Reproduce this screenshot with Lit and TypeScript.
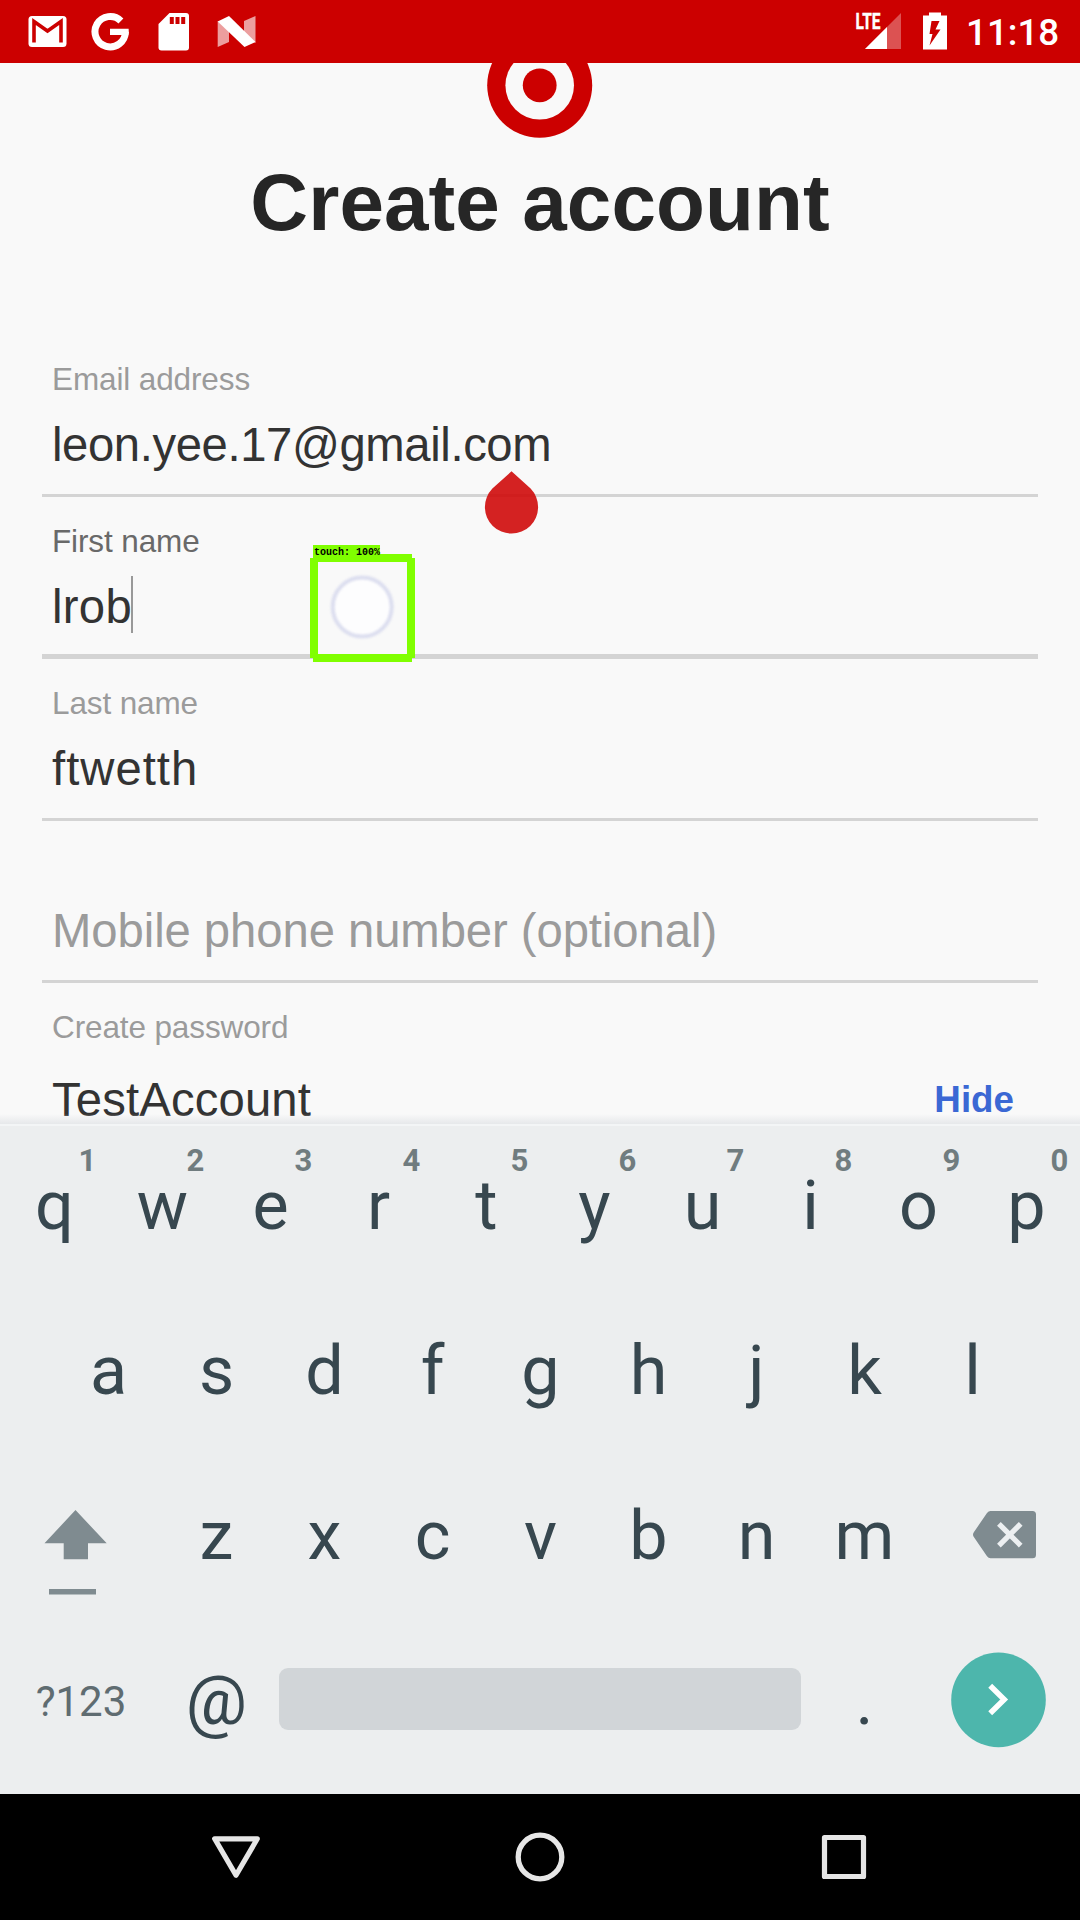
import { LitElement, html, css, nothing } from "lit";
import { customElement, property } from "lit/decorators.js";

@customElement("status-bar")
class StatusBar extends LitElement {
  static styles = css`
    :host { display: flex; justify-content: space-between; height: 63px; background: #cc0000; }
    .left, .right { display: flex; align-items: flex-start; padding-top: 10px; }
    .left { gap: 23px; padding-left: 27px; }
    .right { padding-right: 21px; }
    svg { display: block; }
    .signal { margin-right: 20px; }
    .battery { margin-right: 19px; }
    .time { width: 93px; margin-top: 1px; text-align: right; font: 500 36.75px/44px Roboto, sans-serif; color: #fff; white-space: nowrap; }
    .net { font: 700 21.5px "Roboto", sans-serif; fill: #fff; stroke: #fff; stroke-width: 0.4; }
  `;
  render() {
    return html`
      <div class="left">
        <svg width="40" height="43" viewBox="27 10 40 43">
          <rect x="28.5" y="16" width="38" height="31" rx="3.5" fill="#fff"/>
          <path d="M34 42.5V21.5L47.5 31L61 21.5V42.5" fill="none" stroke="#cc0000" stroke-width="3.6"/>
        </svg>
        <svg width="42" height="43" viewBox="90 10 42 43">
          <path d="M120.9 20.9A15.2 15.2 0 1 0 125.4 32" fill="none" stroke="#fff" stroke-width="7"/>
          <path d="M110 28.7H128.6Q129.1 32 128.4 35H110Z" fill="#fff"/>
        </svg>
        <svg width="37" height="43" viewBox="155 10 37 43">
          <path d="M169.5 13H186Q189 13 189 16V47.500Q189 50.500 186 50.500H161.500Q158.500 50.500 158.500 47.500V24Z" fill="#fff"/>
          <path d="M169.800 17h4v7h-4zM175.500 17h4v7h-4zM181.200 17h4v7h-4z" fill="#cc0000"/>
        </svg>
        <svg width="41" height="43" viewBox="215 10 41 43">
          <path d="M217.700 21L229 28V42L217.700 47Z" fill="#fff" opacity=".62"/>
          <path d="M244 21L255.500 16V43L244 35Z" fill="#fff" opacity=".62"/>
          <path d="M217.700 21.500L229 16L255.500 42L244.500 47Z" fill="#fff"/>
        </svg>
      </div>
      <div class="right">
        <svg class="signal" width="48" height="43" viewBox="854 10 48 43">
          <path d="M900 13V49H864Z" fill="#fff" opacity=".32"/>
          <path d="M886 27V49H864Z" fill="#fff"/>
          <text class="net" x="854.500" y="29" textLength="25" lengthAdjust="spacingAndGlyphs">LTE</text>
        </svg>
        <svg class="battery" width="24" height="43" viewBox="922 10 24 43">
          <path d="M922 15.500H928V12.500H940V15.500H946V49.500H922Z" fill="#fff"/>
          <path d="M930.500 21H938.500L934.500 29.500H939.500L928.500 45.500L931.500 34H928.500Z" fill="#cc0000"/>
        </svg>
        <span class="time">11:18</span>
      </div>`;
  }
}

@customElement("form-field")
class FormField extends LitElement {
  @property() label = "";
  @property() value = "";
  @property() placeholder = "";
  @property() action = "";
  @property({ type: Number }) tracking = 0;
  @property({ type: Boolean }) active = false;
  static styles = css`
    :host { display: flex; flex-direction: column; box-sizing: border-box; height: 162px; padding-top: 25px;
      border-bottom: 3px solid #d4d4d4; font-family: "Liberation Sans", Arial, sans-serif; }
    :host([active]) { border-bottom-width: 5px; }
    .label { height: 38px; padding-left: 10px; font-size: 31.500px; line-height: 38px; color: #9b9b9b; letter-spacing: -0.12px; white-space: nowrap; }
    :host([active]) .label { color: #696969; }
    .row { display: flex; margin-top: 19px; height: 56px; padding: 0 24px 0 10px; }
    :host([action]) .row { margin-top: 26px; }
    .text { font-size: 47.250px; line-height: 56px; color: #333; white-space: nowrap; }
    .hint { color: #9b9b9b; }
    .caret { width: 2px; height: 57px; margin: -3px 0 0 -1px; background: #999; }
    .action { margin-left: auto; font-size: 36.750px; font-weight: 700; line-height: 56px; color: #3b68d4; }
  `;
  render() {
    const spacing = `letter-spacing:${this.tracking}px`;
    return html`
      <div class="label">${this.label}</div>
      <div class="row">
        ${this.value
          ? html`<span class="text" style=${spacing}>${this.value}</span>`
          : html`<span class="text hint" style=${spacing}>${this.placeholder}</span>`}
        ${this.active ? html`<span class="caret"></span>` : nothing}
        ${this.action ? html`<span class="action">${this.action}</span>` : nothing}
      </div>`;
  }
}

@customElement("soft-keyboard")
class SoftKeyboard extends LitElement {
  static styles = css`
    :host { display: flex; flex-direction: column; height: 670px; box-sizing: border-box; border-top: 2px solid #f3f5f6; background: #eceeef;
      font-family: Roboto, sans-serif; color: #37474f; }
    .row { display: flex; height: 165px; }
    .row.inset { padding: 0 54px; }
    .key { display: flex; flex-direction: column; width: 108px; align-items: center; }
    .num { height: 34px; padding-left: 67px; padding-top: 17px; font-size: 31px; font-weight: 700; line-height: 36px; color: #707c7f; }
    .blank { height: 51px; }
    .glyph { font-size: 68.250px; line-height: 76px; margin-top: -9px; padding-left: 1px; }
    .wide { display: flex; width: 162px; }
    svg { display: block; }
    .sym { width: 162px; padding-top: 56px; box-sizing: border-box; text-align: center; font-size: 42px; line-height: 50px; color: #5f6c71; }
    .space { width: 522px; height: 62px; margin: 47px 9px 0 9px; border-radius: 9px; background: #d1d5d8; }
  `;
  key(ch: string, num = "") {
    return html`<div class="key">${num ? html`<span class="num">${num}</span>` : html`<span class="blank"></span>`}<span class="glyph">${ch}</span></div>`;
  }
  render() {
    const top = [..."qwertyuiop"];
    return html`
      <div class="row">${top.map((c, i) => this.key(c, String((i + 1) % 10)))}</div>
      <div class="row inset">${[..."asdfghjkl"].map((c) => this.key(c))}</div>
      <div class="row">
        <div class="wide">
          <svg width="162" height="165" viewBox="0 1456 162 165" fill="#7f8b90">
            <path d="M75.500 1510L106.700 1543.300H88V1559.300H63.700V1543.300H44.500Z"/>
            <rect x="49" y="1589" width="47" height="5.500"/>
          </svg>
        </div>
        ${[..."zxcvbnm"].map((c) => this.key(c))}
        <div class="wide">
          <svg width="162" height="165" viewBox="918 1456 162 165">
            <path d="M990.500 1511H1032.500Q1036 1511 1036 1514.500V1554.800Q1036 1558.300 1032.500 1558.300H990.500Q988.500 1558.300 987 1556.300L974 1537.300Q972 1534.700 974 1532L987 1513Q988.500 1511 990.500 1511Z" fill="#7f8b90"/>
            <path d="M998.900 1523.800L1020.700 1545.600M1020.700 1523.800L998.900 1545.600" stroke="#eceff1" stroke-width="5.200"/>
          </svg>
        </div>
      </div>
      <div class="row">
        <div class="sym">?123</div>
        ${this.key("@")}
        <div class="space"></div>
        ${this.key(".")}
        <div class="wide">
          <svg width="161" height="165" viewBox="918.500 1621 161 165">
            <circle cx="999" cy="1699.900" r="47.300" fill="#4db6ac"/>
            <path d="M990.700 1685.700L1004.700 1699.500L990.700 1713.300" fill="none" stroke="#fff" stroke-width="5.500"/>
          </svg>
        </div>
      </div>`;
  }
}

@customElement("app-root")
class AppRoot extends LitElement {
  static styles = css`
    :host { display: block; position: relative; width: 1080px; height: 1920px; overflow: hidden; background: #f9f9f9; }
    .page { position: relative; display: flex; flex-direction: column; height: 1061px; overflow: hidden; }
    .logo { display: block; align-self: center; flex: none; }
    .title { margin: 0; height: 197px; box-sizing: border-box; padding-top: 15px; text-align: center; flex: none;
      font: 700 80px/100px "Liberation Sans", Arial, sans-serif; letter-spacing: 0.1px; color: #262626; }
    .form { display: flex; flex-direction: column; padding: 0 42px; flex: none; }
    .shade { position: absolute; left: 0; right: 0; bottom: 0; height: 10px; background: linear-gradient(rgba(225,228,230,0), #e6e8ea); }
    .handle { position: absolute; left: 484px; top: 470px; }
    .touch { position: absolute; left: 310px; top: 545px; }
    .ring { fill: none; stroke: #dcdeef; stroke-width: 4; filter: blur(1px); }
    .tag { font: 700 10.500px "Liberation Mono", monospace; fill: #000; }
    .nav { display: flex; height: 126px; background: #000; justify-content: center; gap: 248px; align-items: center; }
    .nav svg { display: block; fill: none; stroke: #e6e6e6; }
  `;
  render() {
    return html`
      <status-bar></status-bar>
      <main class="page">
        <svg class="logo" width="108" height="75" viewBox="486.300 63 108 75">
          <circle cx="540" cy="85.300" r="52.500" fill="#cc0000"/>
          <circle cx="540" cy="85.300" r="34.300" fill="#f9f9f9"/>
          <circle cx="540" cy="85.300" r="16.900" fill="#cc0000"/>
        </svg>
        <h1 class="title">Create account</h1>
        <div class="form">
          <form-field label="Email address" value="leon.yee.17@gmail.com" tracking="-0.4"></form-field>
          <form-field label="First name" value="lrob" tracking="0.3" active></form-field>
          <form-field label="Last name" value="ftwetth" tracking="1"></form-field>
          <form-field placeholder="Mobile phone number (optional)" tracking="-0.07"></form-field>
          <form-field label="Create password" value="TestAccount" tracking="0.15" action="Hide"></form-field>
        </div>
        <div class="shade"></div>
      </main>
      <soft-keyboard></soft-keyboard>
      <nav class="nav">
        <svg width="56" height="56" viewBox="208 1829 56 56"><path d="M214.700 1838.800H257.300L236 1875.300Z" stroke-width="5.200" stroke-linejoin="round"/></svg>
        <svg width="56" height="56" viewBox="512 1829 56 56"><circle cx="540" cy="1857" r="21.800" stroke-width="5.300"/></svg>
        <svg width="56" height="56" viewBox="816 1829 56 56"><rect x="824.500" y="1837.500" width="39" height="39" stroke-width="5.200" stroke-linejoin="round"/></svg>
      </nav>
      <svg class="handle" width="56" height="66" viewBox="484 470 56 66">
        <path d="M511.500 471.300L530.600 488.500A26.600 26.600 0 1 1 492.400 488.500Z" fill="#cf0a0a" fill-opacity=".9"/>
      </svg>
      <svg class="touch" width="106" height="118" viewBox="310 545 106 118">
        <circle cx="362.200" cy="607" r="29" fill="#fdfdfe"/>
        <circle class="ring" cx="362.200" cy="607" r="29.500"/>
        <g fill="#80ff00">
          <rect x="313" y="545" width="67" height="13"/>
          <rect x="313" y="554" width="99" height="8"/>
          <rect x="313" y="654" width="99" height="8"/>
          <rect x="310" y="558" width="8" height="100"/>
          <rect x="407" y="558" width="8" height="100"/>
        </g>
        <text class="tag" x="314" y="555" textLength="66" lengthAdjust="spacingAndGlyphs">touch: 100%</text>
      </svg>`;
  }
}
